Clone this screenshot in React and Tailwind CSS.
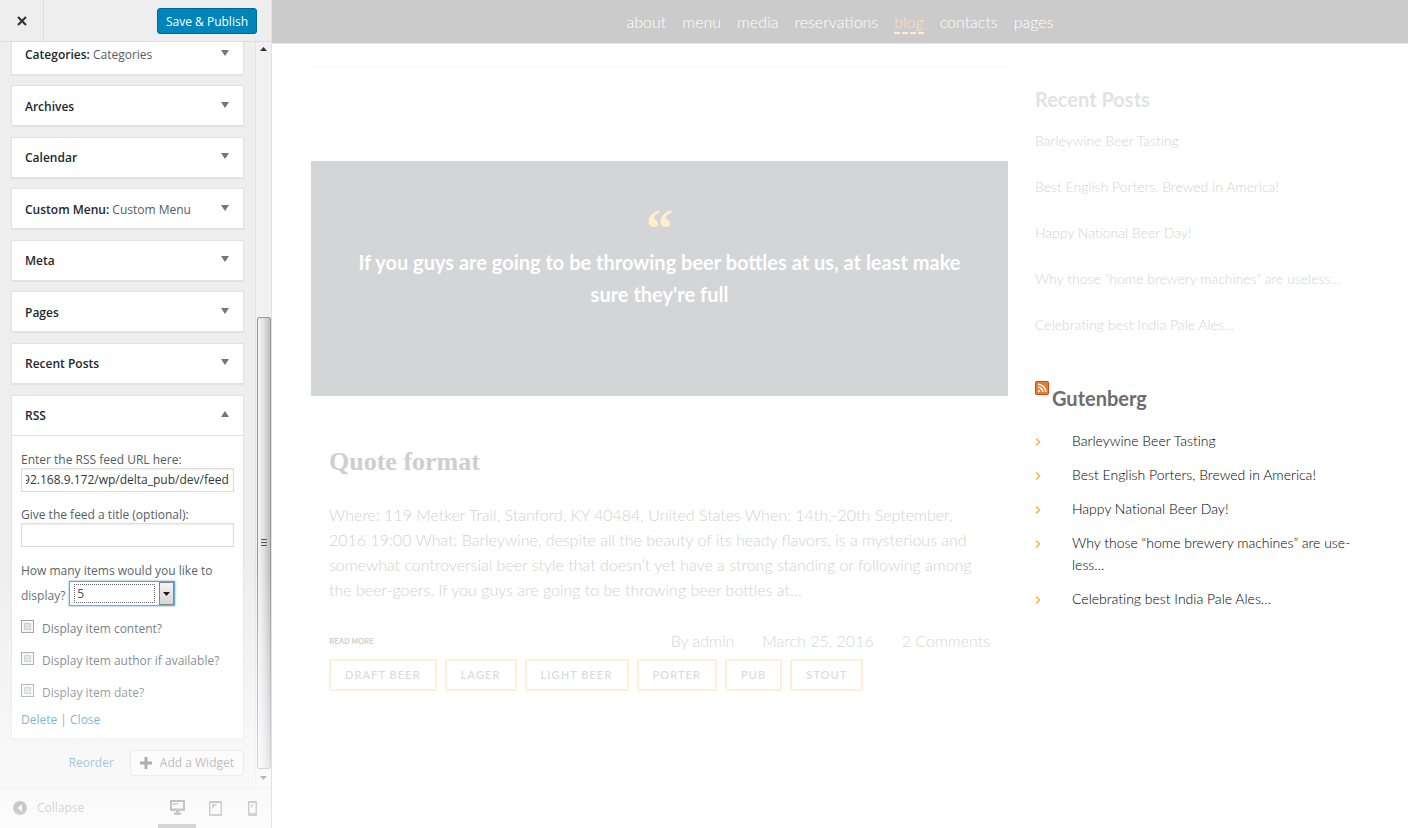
import React, { useEffect, useRef } from 'react';

const widgets = [
  { type: 'Categories', title: 'Categories' },
  { type: 'Archives' },
  { type: 'Calendar' },
  { type: 'Custom Menu', title: 'Custom Menu' },
  { type: 'Meta' },
  { type: 'Pages' },
  { type: 'Recent Posts' },
];

const posts = [
  'Barleywine Beer Tasting',
  'Best English Porters, Brewed in America!',
  'Happy National Beer Day!',
  'Why those “home brewery machines” are useless…',
  'Celebrating best India Pale Ales…',
];

const feed = posts.map((p) => p.replace('useless', 'use\u00ADless'));

const navItems = ['about', 'menu', 'media', 'reservations', 'blog', 'contacts', 'pages'];
const tags = ['Draft beer', 'Lager', 'Light beer', 'Porter', 'Pub', 'Stout'];
const itemCounts = Array.from({ length: 20 }, (_, i) => i + 1);

function Triangle({ up = false }) {
  return (
    <svg viewBox="0 0 8 6" className="h-[6px] w-[8px] fill-[#72777c]" aria-hidden="true">
      {up ? <path d="M0 6h8L4 0z" /> : <path d="M0 0h8L4 6z" />}
    </svg>
  );
}

function WidgetRow({ type, title, open = false }) {
  return (
    <button
      type="button"
      aria-expanded={open}
      className="flex h-[39px] w-full items-center justify-between pt-[2px] pr-[14px] pl-[13px] text-left text-[12px] leading-[20px] text-[#555d66]"
    >
      <span>
        <span className="font-semibold text-[#23282d]">{title ? `${type}:` : type}</span>
        {title ? ` ${title}` : ''}
      </span>
      <span className="flex pb-[4px]">
        <Triangle up={open} />
      </span>
    </button>
  );
}

function FeedUrlInput() {
  const ref = useRef(null);
  useEffect(() => {
    const el = ref.current;
    el.scrollLeft = el.scrollWidth;
  }, []);
  return (
    <input
      id="feed-url"
      ref={ref}
      type="text"
      defaultValue="http://192.168.9.172/wp/delta_pub/dev/feed"
      className="block h-[24px] w-full border border-[#ddd] bg-white px-1 text-[12px] leading-[20px] text-[#32373c] shadow-[inset_0_1px_2px_rgba(0,0,0,0.07)] outline-none"
    />
  );
}

function Option({ id, label }) {
  return (
    <div className="flex h-[32px] items-center gap-[8px]">
      <input
        id={id}
        type="checkbox"
        className="mb-[5px] size-[13px] shrink-0 appearance-none border border-[#8e8f8f] bg-[#d9dcde] shadow-[inset_0_0_0_2px_#f4f4f4,inset_0_0_0_3px_#bfc4c9]"
      />
      <label htmlFor={id}>{label}</label>
    </div>
  );
}

function RssForm() {
  return (
    <form className="border-t border-[#e5e5e5] px-[9px] pt-[15px] text-[12px] text-[#555d66]">
      <label htmlFor="feed-url" className="block leading-[17px]">
        Enter the RSS feed URL here:
      </label>
      <FeedUrlInput />
      <label htmlFor="feed-title" className="mt-[14px] block leading-[17px]">
        Give the feed a title (optional):
      </label>
      <input
        id="feed-title"
        type="text"
        className="block h-[24px] w-full border border-[#ddd] bg-white px-1 text-[12px] shadow-[inset_0_1px_2px_rgba(0,0,0,0.07)]"
      />
      <div className="mt-[11px] leading-[25px]">
        <label htmlFor="feed-items">How many items would you like to display?</label>
        <span className="relative -mt-[3px] mb-[3px] ml-[4px] inline-block h-[25px] w-[106px] align-middle">
          <select
            id="feed-items"
            defaultValue={5}
            className="block size-full appearance-none border border-[#5b9dd9] bg-white pl-[7px] text-[12px] leading-[20px] text-[#32373c] shadow-[0_0_2px_rgba(30,140,190,0.8)] outline-none"
          >
            {itemCounts.map((n) => (
              <option key={n}>{n}</option>
            ))}
          </select>
          <span className="pointer-events-none absolute top-[3px] left-[5px] h-[19px] w-[81px] border border-dotted border-[#555]" />
          <span className="pointer-events-none absolute top-[1px] right-[1px] flex h-[23px] w-[15px] items-center justify-center border border-[#777] bg-linear-to-b from-[#f4f4f4] to-[#cfcfcf]">
            <svg viewBox="0 0 7 4" className="h-[4px] w-[7px] fill-black" aria-hidden="true">
              <path d="M0 0h7L3.500 4z" />
            </svg>
          </span>
        </span>
      </div>
      <div className="mt-[4px]">
        <Option id="show-content" label="Display item content?" />
        <Option id="show-author" label="Display item author if available?" />
        <Option id="show-date" label="Display item date?" />
      </div>
      <p className="pt-px pb-[8px] leading-[20px]">
        <a href="#delete" className="text-[#0073aa]">Delete</a>
        {' | '}
        <a href="#close" className="text-[#0073aa]">Close</a>
      </p>
    </form>
  );
}

function Scrollbar() {
  return (
    <div aria-hidden="true" className="flex w-[16px] shrink-0 flex-col items-center border-l border-[#e2e2e2] bg-[#f1f1f1]">
      <svg viewBox="0 0 7 4" className="mt-[5px] h-[4px] w-[7px] fill-[#333]">
        <path d="M0 4h7L3.500 0z" />
      </svg>
      <div className="flex-[267]" />
      <div className="flex w-[14px] flex-[452] flex-col items-center justify-center gap-[2px] rounded-[2px] border border-[#979797] bg-linear-to-r from-[#f5f5f5] via-[#e0e0e3] to-[#bcbcc2]">
        <span className="h-px w-[6px] bg-[#555]" />
        <span className="h-px w-[6px] bg-[#555]" />
        <span className="h-px w-[6px] bg-[#555]" />
      </div>
      <svg viewBox="0 0 7 4" className="my-[7px] h-[4px] w-[7px] fill-[#333]">
        <path d="M0 0h7L3.500 4z" />
      </svg>
    </div>
  );
}

function Customizer() {
  return (
    <aside className="relative flex h-screen w-[272px] shrink-0 flex-col border-r border-[#e2e2e2] bg-[#eee] font-['Open_Sans','Noto_Sans',sans-serif]">
      <header className="flex h-[42px] shrink-0 items-center justify-between border-b border-[#ddd] pr-[14px]">
        <button type="button" aria-label="Close customizer" className="flex h-full w-[44px] items-center justify-center border-r border-[#ddd]">
          <svg viewBox="0 0 10 10" className="size-[10px] stroke-[#333] stroke-[2.200]" aria-hidden="true">
            <path d="M1 1l8 8M9 1l-8 8" />
          </svg>
        </button>
        <button type="button" className="h-[26px] rounded-[3px] border border-[#006799] bg-[#0085ba] px-[8px] pt-px text-[12px] leading-[23px] text-white">
          Save &amp; Publish
        </button>
      </header>

      <div className="flex min-h-0 flex-1">
        <div className="flex min-w-0 flex-1 flex-col justify-end overflow-hidden pr-[11px] pb-[11px] pl-[11px]">
          <ul className="flex h-[350px] shrink-0 flex-col justify-between">
            {widgets.map((w) => (
              <li key={w.type} className="border border-[#e2e2e2] bg-white shadow-[0_1px_1px_rgba(0,0,0,0.04)]">
                <WidgetRow {...w} />
              </li>
            ))}
          </ul>
          <section className="mt-[11px] shrink-0 border border-[#e2e2e2] bg-white">
            <WidgetRow type="RSS" open />
            <RssForm />
          </section>
          <div className="mt-[11px] flex shrink-0 items-center justify-end gap-[16px] text-[12px] leading-[20px]">
            <a href="#reorder" className="text-[#0073aa]">Reorder</a>
            <button type="button" className="flex h-[26px] items-center gap-[8px] rounded-[3px] border border-[#ccc] bg-[#f7f7f7] px-[9px] text-[#555]">
              <svg viewBox="0 0 12 12" className="size-[12px] stroke-[#333] stroke-3" aria-hidden="true">
                <path d="M6 0v12M0 6h12" />
              </svg>
              Add a Widget
            </button>
          </div>
        </div>
        <Scrollbar />
      </div>

      <footer className="flex h-[41px] shrink-0 items-stretch justify-between border-t border-[#ddd] pl-[13px]">
        <button type="button" className="flex items-center gap-[10px] text-[12px] leading-[20px] text-[#555]">
          <svg viewBox="0 0 14 14" className="size-[14px]" aria-hidden="true">
            <circle cx="7" cy="7" r="7" fill="#333" />
            <path d="M9 3.500v7L4.500 7z" fill="#fff" />
          </svg>
          Collapse
        </button>
        <div className="flex">
          <button type="button" aria-label="Desktop preview" className="flex w-[38px] items-center justify-center border-b-4 border-[#333] pt-[3px]">
            <svg viewBox="0 0 15 15" className="size-[15px]" aria-hidden="true">
              <path fillRule="evenodd" fill="#222" d="M1 0h13a1 1 0 0 1 1 1v9a1 1 0 0 1-1 1H9v1.500h2V15H4v-2.500h2V11H1a1 1 0 0 1-1-1V1a1 1 0 0 1 1-1zm1 2v6.500h11V2z" />
              <path fill="#555" d="M3 3h6L7.500 4.500H4.500L3 6z" />
            </svg>
          </button>
          <button type="button" aria-label="Tablet preview" className="flex w-[38px] items-center justify-center">
            <svg viewBox="0 0 13 15" className="h-[15px] w-[13px]" aria-hidden="true">
              <path fillRule="evenodd" fill="#444" d="M1 0h11a1 1 0 0 1 1 1v13a1 1 0 0 1-1 1H1a1 1 0 0 1-1-1V1a1 1 0 0 1 1-1zm.500 2v11h10V2z" />
              <path fill="#555" d="M3 3h5L3 8z" />
            </svg>
          </button>
          <button type="button" aria-label="Mobile preview" className="flex w-[37px] items-center justify-center">
            <svg viewBox="0 0 9 15" className="h-[15px] w-[9px]" aria-hidden="true">
              <path fillRule="evenodd" fill="#444" d="M1 0h7a1 1 0 0 1 1 1v13a1 1 0 0 1-1 1H1a1 1 0 0 1-1-1V1a1 1 0 0 1 1-1zm.500 2v10h6V2z" />
              <path fill="#555" d="M3 3.500h3L3 7z" />
            </svg>
          </button>
        </div>
      </footer>
      <div className="pointer-events-none absolute inset-x-0 bottom-0 h-[270px] bg-linear-to-b from-white/0 to-white/80" />
    </aside>
  );
}

function SiteNav() {
  return (
    <nav className="flex h-[44px] items-center justify-center gap-[16px] border-b border-[#e2e2e2] bg-[#cbcbcb] pt-[3px] text-[16px] leading-[20px] text-white">
      {navItems.map((item) => (
        <a
          key={item}
          href={`#${item}`}
          className={
            item === 'blog'
              ? 'border-b-2 border-dashed border-[#ffeecb] text-[#fce3c2]'
              : 'border-b-2 border-transparent'
          }
        >
          {item}
        </a>
      ))}
    </nav>
  );
}

function QuotePost() {
  return (
    <article className="border-t border-[#fafafa] pt-[94px]">
      <blockquote className="flex min-h-[235px] flex-col items-center bg-[#d4d5d7] px-[40px] pt-[52px] text-center text-[20px] leading-[32px] font-bold text-white">
        <span aria-hidden="true" className="font-['Liberation_Serif',serif] text-[54px] leading-[33px] text-[#ffeecb]">“</span>
        <p>If you guys are going to be throwing beer bottles at us, at least make sure they're full</p>
      </blockquote>
      <div className="px-[18px] pt-[48px]">
        <h1 className="font-['Liberation_Serif',serif] text-[26px] leading-[36px] font-bold text-[#cecece]">Quote format</h1>
        <p className="mt-[22px] text-[16px] leading-[25px] text-[#d2d2d2]">
          Where: 119 Metker Trail, Stanford, KY 40484, United States When: 14th,-20th September, 2016 19:00 What:
          Barleywine, despite all the beauty of its heady flavors, is a mysterious and somewhat controversial beer style
          that doesn’t yet have a strong standing or following among the beer-goers. If you guys are going to be throwing
          beer bottles at…
        </p>
        <div className="mt-[26px] flex items-center justify-between text-[16px] leading-[26px] text-[#d6d6d6]">
          <a href="#more" className="font-['Noto_Sans_CJK_JP',sans-serif] text-[8px] font-medium text-[#cacaca]">READ MORE</a>
          <div className="flex gap-[28px]">
            <span>By admin</span>
            <time dateTime="2016-03-25">March 25, 2016</time>
            <span>2 Comments</span>
          </div>
        </div>
        <ul className="mt-[5px] flex flex-wrap gap-[8px] text-[11px] leading-[28px] font-medium tracking-widest text-[#dadada] uppercase">
          {tags.map((tag) => (
            <li key={tag}>
              <a href="#tag" className="block rounded-[2px] border-2 border-[#ffeed8] px-[14px]">{tag}</a>
            </li>
          ))}
        </ul>
      </div>
    </article>
  );
}

function RssIcon() {
  return (
    <svg viewBox="0 0 14 14" className="size-[14px]" aria-hidden="true">
      <rect width="14" height="14" rx="2" fill="#cf4a17" />
      <rect x="1" y="1" width="12" height="12" rx="1" fill="#ea7a2c" />
      <circle cx="4" cy="10" r="1.300" fill="#fff" />
      <path d="M3 6.200A4.800 4.800 0 0 1 7.800 11M3 3.200A7.800 7.800 0 0 1 10.800 11" fill="none" stroke="#fff" strokeWidth="1.500" />
    </svg>
  );
}

function PostSidebar() {
  return (
    <div className="pt-[19px] text-[14px] leading-[22px] [font-variant-ligatures:none]">
      <section>
        <h2 className="text-[20px] leading-[28px] font-bold text-[#e2e2e2]">Recent Posts</h2>
        <ul className="mt-[17px] flex flex-col gap-[24px] text-[#d4d4d4]">
          {posts.map((p) => (
            <li key={p}><a href="#post">{p}</a></li>
          ))}
        </ul>
      </section>
      <section className="mt-[45px]">
        <h2 className="flex items-start gap-[3px] text-[20px] leading-[34px] font-bold text-[#6d6d6d]">
          <RssIcon />
          <a href="#gutenberg">Gutenberg</a>
        </h2>
        <ul className="mt-[15px] flex flex-col gap-[12px] text-black">
          {feed.map((p) => (
            <li key={p} className="flex gap-[31px]">
              <svg viewBox="0 0 6 8" className="mt-[8px] h-[8px] w-[6px] shrink-0 fill-none stroke-[#fbb040] stroke-[1.500]" aria-hidden="true">
                <path d="M1 0.500L4.500 4L1 7.500" />
              </svg>
              <a href="#post">{p}</a>
            </li>
          ))}
        </ul>
      </section>
    </div>
  );
}

export default function App() {
  return (
    <div className="flex min-h-screen bg-white">
      <Customizer />
      <main className="min-w-0 flex-1 font-[Lato,sans-serif] font-light">
        <SiteNav />
        <div className="mx-auto grid max-w-[1058px] grid-cols-[minmax(0,697fr)_minmax(0,334fr)] gap-x-[27px] pt-[22px]">
          <QuotePost />
          <PostSidebar />
        </div>
      </main>
    </div>
  );
}
